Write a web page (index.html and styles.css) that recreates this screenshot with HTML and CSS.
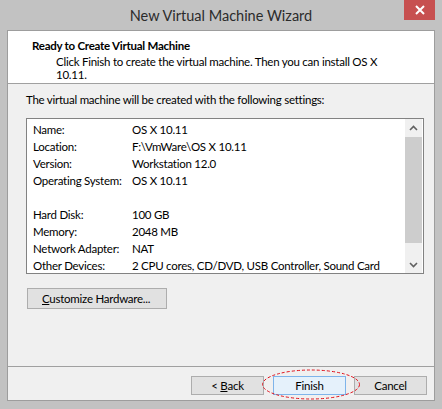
FILE: index.html
```html
<!DOCTYPE html>
<html>
<head>
<meta charset="utf-8">
<link rel="stylesheet" href="styles.css">
</head>
<body>
<div class="window">
  <div class="titlebar">
    <span class="title">New Virtual Machine Wizard</span>
    <button class="close" aria-label="Close">
      <svg width="10" height="10" viewBox="0 0 10 10"><path d="M1 1 L9 9 M9 1 L1 9" stroke="#fff" stroke-width="2" fill="none"/></svg>
    </button>
  </div>
  <div class="client">
    <div class="header">
      <div class="h-title">Ready to Create Virtual Machine</div>
      <div class="h-sub">Click Finish to create the virtual machine. Then you can install OS X 10.11.</div>
    </div>
    <div class="body">
      <div class="intro">The virtual machine will be created with the following settings:</div>
      <div class="listbox">
        <div class="rows">
          <div class="row"><span class="k">Name:</span><span class="v">OS X 10.11</span></div>
          <div class="row"><span class="k">Location:</span><span class="v">F:\VmWare\OS X 10.11</span></div>
          <div class="row"><span class="k">Version:</span><span class="v">Workstation 12.0</span></div>
          <div class="row"><span class="k">Operating System:</span><span class="v">OS X 10.11</span></div>
          <div class="row"></div>
          <div class="row"><span class="k">Hard Disk:</span><span class="v">100 GB</span></div>
          <div class="row"><span class="k">Memory:</span><span class="v">2048 MB</span></div>
          <div class="row"><span class="k">Network Adapter:</span><span class="v">NAT</span></div>
          <div class="row"><span class="k">Other Devices:</span><span class="v">2 CPU cores, CD/DVD, USB Controller, Sound Card</span></div>
        </div>
        <div class="scrollbar">
          <div class="arrow"><svg width="9" height="6" viewBox="0 0 9 6"><path d="M1 5 L4.5 1.5 L8 5" stroke="#606060" stroke-width="1.6" fill="none"/></svg></div>
          <div class="track"><div class="thumb"></div></div>
          <div class="arrow"><svg width="9" height="6" viewBox="0 0 9 6"><path d="M1 1 L4.5 4.5 L8 1" stroke="#606060" stroke-width="1.6" fill="none"/></svg></div>
        </div>
      </div>
      <button class="btn customize"><u>C</u>ustomize Hardware...</button>
    </div>
    <div class="footer">
      <button class="btn">&lt; <u>B</u>ack</button>
      <div class="finish-wrap">
        <button class="btn finish">Finish</button>
        <svg class="mark" width="100" height="31" viewBox="0 0 100 31"><ellipse cx="50" cy="15.5" rx="48.5" ry="14.5" fill="none" stroke="#e0101a" stroke-width="1" stroke-dasharray="3 2"/></svg>
      </div>
      <button class="btn">Cancel</button>
    </div>
  </div>
</div>
</body>
</html>
```
FILE: styles.css
```css
* { box-sizing: border-box; }
html, body { margin: 0; padding: 0; }
body {
  width: 442px;
  height: 409px;
  overflow: hidden;
  font-family: Lato, "Noto Sans", "Liberation Sans", sans-serif;
  font-size: 11.5px;
  letter-spacing: -0.25px;
  color: #000;
}
.window {
  width: 442px;
  height: 409px;
  background: #c2c2c2;
  padding: 0 7px 8px 7px;
  display: flex;
  flex-direction: column;
}
.titlebar {
  position: relative;
  height: 30px;
  flex: none;
  display: flex;
  align-items: center;
  justify-content: center;
}
.title {
  font-size: 14.5px;
  letter-spacing: 0;
  color: #2b2b2b;
  margin-top: 1px;
}
.close {
  position: absolute;
  top: 0;
  right: 0;
  width: 31px;
  height: 20px;
  border: none;
  padding: 0;
  background: #c75050;
  display: flex;
  align-items: center;
  justify-content: center;
}
.client {
  flex: 1;
  border: 1px solid #9d9d9d;
  background: #f0f0f0;
  display: flex;
  flex-direction: column;
}
.header {
  height: 53px;
  flex: none;
  background: #fff;
  border-bottom: 1px solid #a0a0a0;
  padding: 6px 0 0 24px;
}
.h-title {
  font-weight: bold;
  line-height: 17px;
}
.h-sub {
  line-height: 13px;
  padding-left: 24px;
  margin-top: 1px;
  width: 356px;
}
.body {
  flex: 1;
  padding: 7px 10px 0 18px;
}
.intro {
  line-height: 17px;
}
.listbox {
  margin-top: 10px;
  height: 156px;
  width: 398px;
  border: 1px solid #828282;
  background: #fff;
  display: flex;
  overflow: hidden;
}
.rows {
  flex: 1;
  padding: 2px 0 0 6px;
  overflow: hidden;
}
.row {
  display: flex;
  height: 17px;
  line-height: 17px;
  white-space: nowrap;
}
.k { width: 99px; flex: none; }
.scrollbar {
  width: 17px;
  margin-right: 1px;
  background: #f0f0f0;
  display: flex;
  flex-direction: column;
}
.arrow {
  height: 17px;
  flex: none;
  display: flex;
  align-items: center;
  justify-content: center;
}
.track {
  flex: 1;
  padding: 1px 0 0 0;
}
.thumb {
  height: 106px;
  background: #cdcdcd;
}
.btn {
  font: inherit;
  letter-spacing: inherit;
  color: #000;
  background: #e1e1e1;
  border: 1px solid #adadad;
  padding: 0;
  line-height: 17px;
  white-space: nowrap;
}
.customize {
  margin: 14px 0 0 1px;
  width: 140px;
  height: 21px;
  text-align: left;
  padding-left: 14px;
}
.footer {
  height: 34px;
  flex: none;
  border-top: 1px solid #a0a0a0;
  display: flex;
  justify-content: flex-end;
  align-items: flex-start;
  padding: 9px 7px 0 0;
  gap: 8px;
}
.footer .btn {
  width: 73px;
  height: 19px;
}
.finish-wrap {
  position: relative;
  margin-left: 1px;
}
.finish {
  display: block;
  background: #e5f1fb;
  border-color: #7eb4ea;
}
.mark {
  position: absolute;
  left: -12px;
  top: -7px;
  pointer-events: none;
}
```
